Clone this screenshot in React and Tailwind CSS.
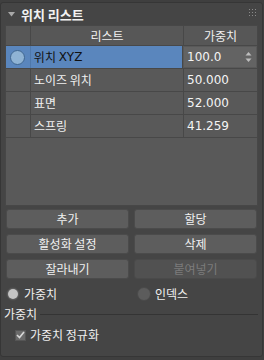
import React from "react";

const KR = { fontFamily: '"Noto Sans CJK KR", "Noto Sans", sans-serif' };
const NUM = { fontFamily: '"DejaVu Sans", "Liberation Sans", sans-serif' };

function Btn({ children, disabled }) {
  return (
    <div
      className={
        "flex-1 h-[20px] flex items-center justify-center rounded-[3px] border text-[12px] leading-none " +
        (disabled
          ? "bg-[#515151] border-[#4a4a4a] text-[#7c7c7c]"
          : "bg-[#5d5d5d] border-[#4b4b4b] text-[#f0f0f0]")
      }
      style={KR}
    >
      {children}
    </div>
  );
}

function Row({ name, value, selected }) {
  return (
    <div className="flex h-[23px] border-b border-[#484848]">
      <div
        className={
          "w-[25px] flex items-center justify-center border-r " +
          (selected ? "bg-[#5a86bd] border-[#4f78aa]" : "bg-[#595959] border-[#484848]")
        }
      >
        {selected && (
          <div className="w-[15px] h-[15px] rounded-full bg-[#8fb3d4] border border-[#3f6690]" />
        )}
      </div>
      <div
        className={
          "w-[153px] flex items-center pl-[3px] text-[12px] border-r border-[#484848] " +
          (selected ? "bg-[#5a86bd] text-[#111]" : "bg-[#595959] text-[#f0f0f0]")
        }
        style={KR}
      >
        {name}
      </div>
      <div className="flex-1 flex items-center bg-[#595959]">
        {selected ? (
          <div className="mx-[1px] h-[20px] w-[72px] bg-[#636363] flex items-center justify-between pl-[3px] pr-[4px]">
            <span className="text-[12px] text-[#f4f4f4]" style={NUM}>
              {value}
            </span>
            <svg width="7" height="12" viewBox="0 0 7 12">
              <path d="M0.5 4.5 L3.5 1 L6.5 4.5 Z" fill="#bdbdbd" />
              <path d="M0.5 7.5 L3.5 11 L6.5 7.5 Z" fill="#bdbdbd" />
            </svg>
          </div>
        ) : (
          <span className="pl-[3px] text-[12px] text-[#f4f4f4]" style={NUM}>
            {value}
          </span>
        )}
      </div>
    </div>
  );
}

export default function App() {
  return (
    <div className="w-[264px] h-[360px] bg-[#3f3f3f] overflow-hidden">
      <div className="w-[263px] h-[355px] mt-[2px] bg-[#454545] border border-[#363636] rounded-[3px] flex flex-col">
        {/* title */}
        <div className="h-[22px] flex items-center pl-[7px] pr-[6px] shrink-0">
          <svg width="7" height="5" viewBox="0 0 7 5" className="mr-[6px]">
            <path d="M0 0 L7 0 L3.5 4.5 Z" fill="#a8a8a8" />
          </svg>
          <span className="text-[13px] font-bold text-[#f2f2f2] leading-none" style={KR}>
            위치 리스트
          </span>
          <div className="flex-1" />
          <svg width="7" height="7" viewBox="0 0 7 7" className="mt-[-4px]">
            {[0, 3, 6].map((y) =>
              [0, 3, 6].map((x) => (
                <rect key={x + "-" + y} x={x} y={y} width="1" height="1" fill="#8a8a8a" />
              ))
            )}
          </svg>
        </div>

        {/* table */}
        <div className="mx-[4px] h-[181px] bg-[#595959] border border-[#474747] flex flex-col shrink-0">
          <div className="flex h-[20px] border-b border-[#484848] bg-[#575757]">
            <div className="w-[25px] border-r border-[#484848]" />
            <div
              className="w-[153px] border-r border-[#484848] flex items-center justify-center text-[12px] text-[#f0f0f0]"
              style={KR}
            >
              리스트
            </div>
            <div className="flex-1 flex items-center justify-center text-[12px] text-[#f0f0f0]" style={KR}>
              가중치
            </div>
          </div>
          <Row
            name={
              <>
                {"위치\u00a0"}
                <span style={NUM}>XYZ</span>
              </>
            }
            value="100.0"
            selected
          />
          <Row name="노이즈 위치" value="50.000" />
          <Row name="표면" value="52.000" />
          <Row name="스프링" value="41.259" />
        </div>

        {/* buttons */}
        <div className="mx-[5px] mt-[3px] flex flex-col gap-[5px] shrink-0">
          <div className="flex gap-[5px]">
            <Btn>추가</Btn>
            <Btn>할당</Btn>
          </div>
          <div className="flex gap-[5px]">
            <Btn>활성화 설정</Btn>
            <Btn>삭제</Btn>
          </div>
          <div className="flex gap-[5px]">
            <Btn>잘라내기</Btn>
            <Btn disabled>붙여넣기</Btn>
          </div>
        </div>

        {/* radios */}
        <div className="flex items-center h-[16px] mt-[7px] pl-[5px] shrink-0">
          <div className="w-[131px] flex items-center gap-[4px]">
            <div className="w-[14px] h-[14px] rounded-full bg-[#5c5c5c] border border-[#4a4a4a] flex items-center justify-center">
              <div className="w-[10px] h-[10px] rounded-full bg-[#c4c4c4]" />
            </div>
            <span className="text-[12px] text-[#f0f0f0]" style={KR}>
              가중치
            </span>
          </div>
          <div className="flex items-center gap-[4px]">
            <div className="w-[14px] h-[14px] rounded-full bg-[#5c5c5c] border border-[#4a4a4a]" />
            <span className="text-[12px] text-[#f0f0f0]" style={KR}>
              인덱스
            </span>
          </div>
        </div>

        {/* group */}
        <div className="flex items-center mt-[4px] pl-[3px] pr-[4px] h-[16px] shrink-0">
          <span className="text-[12px] text-[#f0f0f0]" style={KR}>
            가중치
          </span>
          <div className="flex-1 ml-[3px] h-[1px] bg-[#343434]" />
        </div>

        <div className="flex items-center mt-[6px] pl-[14px] h-[14px] gap-[4px] shrink-0">
          <div className="w-[11px] h-[11px] bg-[#6a6a6a] border border-[#555] flex items-center justify-center">
            <svg width="9" height="8" viewBox="0 0 9 8">
              <path d="M1 4 L3.5 6.5 L8 1" stroke="#d8d8d8" strokeWidth="1.6" fill="none" />
            </svg>
          </div>
          <span className="text-[12px] text-[#f0f0f0]" style={KR}>
            가중치 정규화
          </span>
        </div>
      </div>
    </div>
  );
}
